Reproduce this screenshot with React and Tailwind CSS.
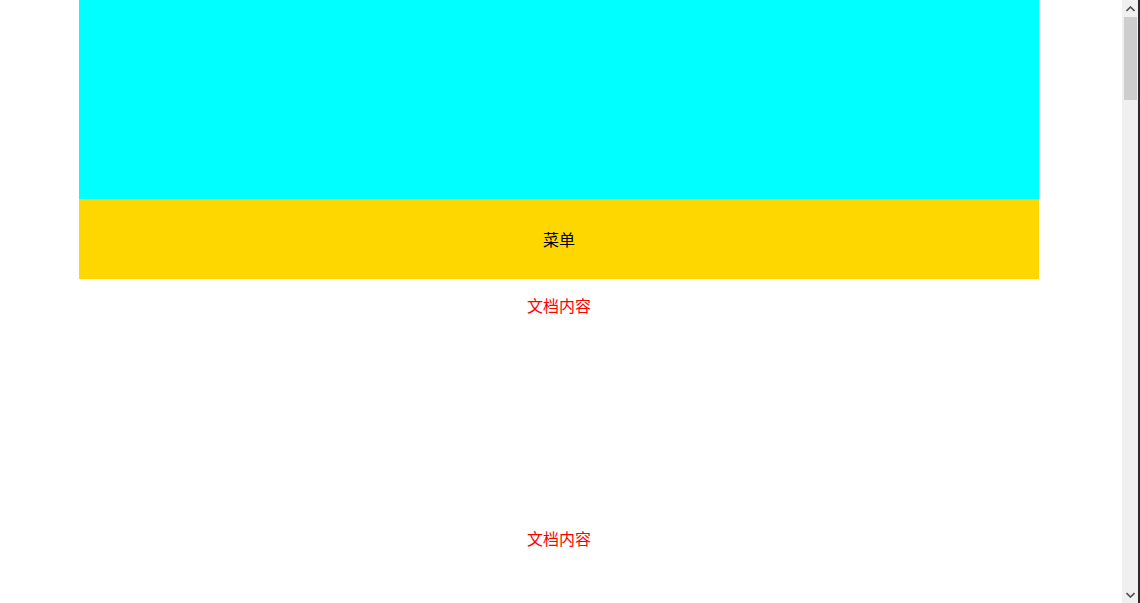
import React from 'react'

// only the two blocks that fall inside the window are drawn
const items = [0, 1]

// fake window scrollbar, drawn to match the screenshot
const Scrollbar = () => (
  <div className="w-[18px] h-full flex shrink-0">
    <div className="flex-1 bg-[#f0f0f0] flex flex-col items-center">
      <div className="h-[17px] w-full flex items-center justify-center">
        <svg width="9" height="6" viewBox="0 0 9 6">
          <path d="M0.5 5 L4.5 1 L8.5 5" fill="none" stroke="#505050" strokeWidth="1.6" />
        </svg>
      </div>
      <div className="w-[13px] h-[83px] bg-[#cdcdcd]" />
      <div className="flex-1" />
      <div className="h-[17px] w-full flex items-center justify-center">
        <svg width="9" height="6" viewBox="0 0 9 6">
          <path d="M0.5 1 L4.5 5 L8.5 1" fill="none" stroke="#505050" strokeWidth="1.6" />
        </svg>
      </div>
    </div>
    <div className="w-[2px] bg-[#2b2b2b]" />
  </div>
)

const App = () => {
  return (
    <div
      className="h-screen flex overflow-hidden bg-white text-base"
      style={{ fontFamily: '"Noto Sans CJK SC", "Noto Sans", sans-serif' }}
    >
      <div className="flex-1 overflow-hidden">
        <div className="w-[960px] ml-[79px]">
          {/* Header */}
          <div className="h-[199px] bg-[#00ffff]" />

          {/* Menu */}
          <div className="h-20 bg-[#ffd700] flex items-center justify-center text-black">
            菜单
          </div>

          {/* Content */}
          {items.map(i => (
            <div key={i} className="h-[233px] pt-[14px] text-center text-[#ff0000] leading-6">
              文档内容
            </div>
          ))}
        </div>
      </div>
      <Scrollbar />
    </div>
  )
}

export default App
